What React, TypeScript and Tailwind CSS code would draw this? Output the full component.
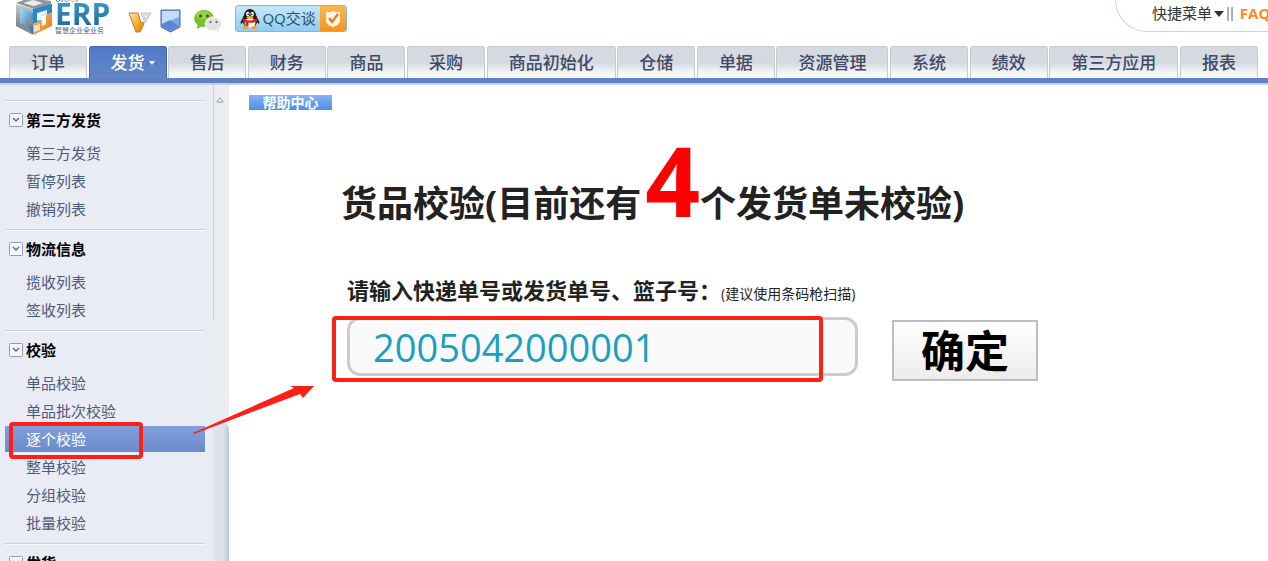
import { useState } from 'react'
import type { FormEvent } from 'react'

const TABS = [
  '订单',
  '发货',
  '售后',
  '财务',
  '商品',
  '采购',
  '商品初始化',
  '仓储',
  '单据',
  '资源管理',
  '系统',
  '绩效',
  '第三方应用',
  '报表',
]

const MENU = [
  { title: '第三方发货', items: ['第三方发货', '暂停列表', '撤销列表'] },
  { title: '物流信息', items: ['揽收列表', '签收列表'] },
  {
    title: '校验',
    items: ['单品校验', '单品批次校验', '逐个校验', '整单校验', '分组校验', '批量校验'],
  },
  { title: '发货', items: [] },
]

function Logo() {
  return (
    <a href="#home" aria-label="ERP" className="flex h-9 gap-[2px]">
      <svg width="38" height="36" viewBox="0 0 38 36">
        <defs>
          <linearGradient id="cubeGray" x1="0" y1="0" x2="0" y2="1">
            <stop offset="0" stopColor="#c9cbcd" />
            <stop offset="1" stopColor="#63676b" />
          </linearGradient>
          <linearGradient id="cubeBlue" x1="0" y1="0" x2="1" y2="1">
            <stop offset="0" stopColor="#a5dcf6" />
            <stop offset="1" stopColor="#1b6fb4" />
          </linearGradient>
          <linearGradient id="cubeOrange" x1="0" y1="0" x2="1" y2="1">
            <stop offset="0" stopColor="#f8bd62" />
            <stop offset="1" stopColor="#dd7d12" />
          </linearGradient>
        </defs>
        <path d="M1 3 14-2 36 1v4L19 9z" fill="#8e959b" />
        <path d="M8 3 18 0l10 3-9 3z" fill="#e9edf0" />
        <path d="M1 4 18 9v25L1 26z" fill="url(#cubeGray)" />
        <path d="M5 9l13 4v7l-7-2v6l7 3v7l-7-3-6-4z" fill="url(#cubeBlue)" />
        <path d="M18 9 37 4v9l-11 3v5l-8 3z" fill="#2a86c8" />
        <path d="M22 13l10-3v4l-6 2v4l-4 1z" fill="#eaf6fc" />
        <path d="M37 13v13L18 35V24l9-3v5l4-2v-9z" fill="url(#cubeOrange)" />
        <path d="M19 26l6-2v6l-6 2z" fill="#fbe4bd" />
        <path d="M1 26l6-3 7 5 4 7z" fill="#868b90" />
      </svg>
      <span className="relative flex flex-col">
        <svg width="24" height="3" viewBox="0 0 24 3" className="absolute top-0 left-0">
          <path d="M1 0l2 2 2-2M7 0v2M10 0c0 2 3 2 4 0" stroke="#3b93bf" fill="none" />
          <path d="M16 0c0 2 4 2 4 0" stroke="#f0954a" fill="none" />
          <path d="M22 0v2" stroke="#3b93bf" />
        </svg>
        <span className="bg-linear-to-b from-[#3f9ccb] to-[#1d6a9b] bg-clip-text text-[30px] leading-[27px] font-bold text-transparent">
          ERP
        </span>
        <span className="text-[7px] leading-[7px] text-[#3c5a86]">智慧企业全业务</span>
      </span>
    </a>
  )
}

function Badges() {
  return (
    <div className="flex items-center gap-2">
      <svg width="24" height="24" viewBox="0 0 24 24">
        <defs>
          <linearGradient id="gold" x1="0" y1="0" x2="1" y2="1">
            <stop offset="0" stopColor="#fff0b8" />
            <stop offset="0.5" stopColor="#f6b432" />
            <stop offset="1" stopColor="#d9780a" />
          </linearGradient>
        </defs>
        <path d="M1 4h9l3 10 2-1 1 2-4 8H8z" fill="url(#gold)" stroke="#b9792e" />
        <path d="M13 4h10l-6 10z" fill="#e6e6e6" stroke="#c4c4c4" />
        <path d="M16 6h4l-3 5z" fill="#fff" stroke="#cfcfcf" />
      </svg>
      <svg width="21" height="24" viewBox="0 0 21 24">
        <path d="M1 1h19v17l-9.500 5L1 18z" fill="#7fa8e8" stroke="#4768a8" />
        <path d="M2 2h17v6L2 15z" fill="#c3dcfa" />
        <path d="M2 15l8-4 9 6-8.500 5L2 18z" fill="#5a86d3" />
      </svg>
      <svg width="30" height="24" viewBox="0 0 30 24" className="ml-1">
        <path d="M5 15l-1 5 5-3z" fill="#6db522" />
        <ellipse cx="11" cy="9.500" rx="10" ry="8.500" fill="#79c02a" />
        <ellipse cx="10" cy="6" rx="7" ry="4" fill="#95d24b" />
        <circle cx="7.500" cy="7" r="1.500" fill="#31551a" />
        <circle cx="14.500" cy="7" r="1.500" fill="#31551a" />
        <path d="M24 19l2 4-5-2z" fill="#cfcfcf" />
        <ellipse cx="20.500" cy="15" rx="8.500" ry="7" fill="#e3e3e3" stroke="#fff" />
        <circle cx="17.500" cy="13" r="1.200" fill="#777" />
        <circle cx="23.500" cy="13" r="1.200" fill="#777" />
      </svg>
    </div>
  )
}

function QQButton() {
  return (
    <button
      type="button"
      className="flex h-[27px] items-center overflow-hidden rounded-[3px] border border-[#7db9dc] bg-linear-to-b from-[#c5e7fa] to-[#8fcdf1] text-[15px] text-[#274f6b]"
    >
      <svg width="20" height="20" viewBox="0 0 20 20" className="mr-[2px] ml-1">
        <path d="M3 9c-2 2-3 5-2 6l2-2zM17 9c2 2 3 5 2 6l-2-2z" fill="#1c1c1c" />
        <ellipse cx="10" cy="11" rx="7.500" ry="8" fill="#1c1c1c" />
        <ellipse cx="10" cy="6.500" rx="6" ry="6.500" fill="#1c1c1c" />
        <ellipse cx="10" cy="14" rx="5.500" ry="5" fill="#fff" />
        <ellipse cx="7.800" cy="5" rx="1.700" ry="2.300" fill="#fff" />
        <ellipse cx="12.200" cy="5" rx="1.700" ry="2.300" fill="#fff" />
        <circle cx="8.200" cy="5.200" r="0.800" />
        <circle cx="11.800" cy="5.200" r="0.800" />
        <ellipse cx="10" cy="8.300" rx="3.500" ry="1.200" fill="#f4a51c" />
        <path d="M3 9.500c4 2.500 10 2.500 14 0l.5 2.500c-4 2-7 2-9 1.700V17H5.500v-4L2.500 12z" fill="#e3231b" />
        <path d="M3 18c2-1.500 5-1 6 .5L8 20H4zM17 18c-2-1.500-5-1-6 .5l1 1.500h4z" fill="#f4a51c" />
      </svg>
      <span className="pr-1">QQ交谈</span>
      <span className="flex h-full w-[26px] items-center justify-center bg-linear-to-b from-[#fdb54b] to-[#f5941c]">
        <svg width="16" height="18" viewBox="0 0 16 18">
          <path d="M1 2c3 0 5 0 7-1 2 1 4 1 7 1v8c0 4-4 6-7 7-3-1-7-3-7-7z" fill="#fff6e4" />
          <path d="M4 8l3 4 6-8" fill="none" stroke="#ee7221" strokeWidth="2.200" />
        </svg>
      </span>
    </button>
  )
}

function Header() {
  return (
    <header className="flex h-[46px] justify-between overflow-hidden pl-[15px]">
      <div className="flex items-start">
        <Logo />
        <div className="mt-[9px] ml-[18px]">
          <Badges />
        </div>
        <div className="mt-[5px] ml-3">
          <QQButton />
        </div>
      </div>
      <div className="flex h-8 w-[153px] shrink-0 items-center overflow-hidden rounded-bl-[32px] border-b border-l border-[#c3d5ee] pb-1 pl-9 text-[15px] whitespace-nowrap text-[#333]">
        <a href="#quick">快捷菜单</a>
        <svg width="10" height="6" viewBox="0 0 10 6" className="mx-[2px] shrink-0">
          <path d="M0 0h10L5 6z" fill="#333" />
        </svg>
        <span className="font-['Liberation_Sans'] text-[#8a7f86]">||</span>
        <a href="#faq" className="ml-[6px] font-bold text-[#ff8a1c]">
          FAQ
        </a>
      </div>
    </header>
  )
}

function TabBar() {
  return (
    <nav className="flex justify-between border-b-[5px] border-[#5f82c3] pr-[10px] pl-[9px] shadow-[0_2px_0_#ccd0dc]">
      {TABS.map((tab) => (
        <a
          key={tab}
          href="#tab"
          className={`flex h-8 items-center rounded-t-[3px] border border-b-0 px-[21px] text-[17px] font-medium whitespace-nowrap ${
            tab === '发货'
              ? 'border-[#4468ae] bg-linear-to-b from-[#5179c8] to-[#6486c8] font-bold text-white'
              : 'border-[#c5cad3] bg-linear-to-b from-[#d5d9e0] from-50% to-[#f6f8f8] to-85% text-[#3e4a66]'
          }`}
        >
          {tab}
          {tab === '发货' && (
            <svg width="6" height="4" viewBox="0 0 6 4" className="-mr-[10px] ml-1">
              <path d="M0 0h6L3 4z" fill="#fff" />
            </svg>
          )}
        </a>
      ))}
    </nav>
  )
}

function Sidebar() {
  const [active, setActive] = useState('逐个校验')

  return (
    <aside className="flex w-[229px] shrink-0 bg-[#e9ecf4]">
      <div className="flex-1 overflow-hidden pt-[15px] pr-2 pl-[5px]">
        {MENU.map((group) => (
          <section
            key={group.title}
            className="border-t border-[#c2d2ea] pt-1 pb-[6px] shadow-[inset_0_1px_0_#f8fafd]"
          >
            <h2 className="mb-1 flex h-[30px] items-center gap-[3px] pl-1 text-[15px] font-bold text-black">
              <svg width="14" height="14" viewBox="0 0 14 14">
                <rect x="0.500" y="0.500" width="13" height="13" rx="1" fill="#f4f6fb" stroke="#8f9dc6" />
                <path d="M4 5l3 3 3-3" fill="none" stroke="#5a6a98" strokeWidth="1.500" />
              </svg>
              {group.title}
            </h2>
            <ul>
              {group.items.map((item) => (
                <li key={item} className="relative h-7 py-px">
                  <a
                    href="#menu"
                    onClick={() => setActive(item)}
                    className={`flex h-[26px] items-center pl-[21px] text-[15px] ${
                      item === active
                        ? 'bg-linear-to-b from-[#819fdb] to-[#6c8bcb] text-white'
                        : 'text-[#4d5b7c]'
                    }`}
                  >
                    {item}
                  </a>
                  {item === active && (
                    <span className="absolute -top-[3px] left-1 h-[37px] w-[134px] rounded-[4px] border-4 border-[#ff1f14]" />
                  )}
                </li>
              ))}
            </ul>
          </section>
        ))}
      </div>
      <div className="flex w-4 flex-col bg-[#ebedf3]">
        <div className="h-[235px] border-l border-[#cfcfd6] pt-3 pl-[2px]">
          <svg width="8" height="6" viewBox="0 0 8 6">
            <path d="M4 .7 7.200 5H.8z" fill="#fff" stroke="#999" />
          </svg>
        </div>
        <div className="mt-[104px] flex-1 rounded-tr-[6px] bg-linear-to-r from-[#dde2ed] from-60% to-[#bcc5dc]" />
      </div>
    </aside>
  )
}

function CheckForm() {
  const [code, setCode] = useState('2005042000001')

  const handleSubmit = (e: FormEvent) => {
    e.preventDefault()
  }

  return (
    <form onSubmit={handleSubmit} className="mt-[22px] pl-[92px]">
      <h1 className="text-4xl leading-[96px] font-bold whitespace-nowrap text-[#222]">
        货品校验(目前还有<span className="ml-1 text-8xl leading-[96px] text-[#ff0000]">4</span>
        个发货单未校验)
      </h1>
      <div className="mt-[22px] pl-[6px]">
        <label htmlFor="code" className="block leading-8 whitespace-nowrap text-[#222]">
          <span className="text-[22px] font-bold">请输入快递单号或发货单号、篮子号：</span>
          <span className="text-sm">(建议使用条码枪扫描)</span>
        </label>
        <div className="mt-2 flex items-start gap-[34px]">
          <div className="relative w-[511px]">
            <input
              id="code"
              type="text"
              value={code}
              onChange={(e) => setCode(e.target.value)}
              className="h-[59px] w-full rounded-[13px] border-[3px] border-[#ccc] bg-[#fafafa] px-[23px] text-[38px] text-[#1a9fc0] outline-none"
            />
            <span className="pointer-events-none absolute -top-px -left-[15px] h-[66px] w-[491px] rounded-[4px] border-4 border-[#ff1f14]" />
          </div>
          <button
            type="submit"
            className="mt-[3px] h-[61px] w-[146px] border-2 border-[#bdbdbd] bg-linear-to-b from-white to-[#ececec] text-[44px] leading-none font-bold text-black"
          >
            确定
          </button>
        </div>
      </div>
    </form>
  )
}

export default function App() {
  return (
    <div className="relative flex h-screen flex-col overflow-hidden bg-white font-['Open_Sans','Noto_Sans_CJK_SC',sans-serif]">
      <Header />
      <TabBar />
      <div className="mt-[2px] flex min-h-0 flex-1">
        <Sidebar />
        <main className="min-w-0 flex-1 pt-[10px] pl-5">
          <a
            href="#help"
            className="flex h-[15px] w-[83px] items-center justify-center overflow-hidden bg-linear-to-b from-[#86b4f0] to-[#4f8de6] text-sm leading-none font-bold text-white"
          >
            帮助中心
          </a>
          <CheckForm />
        </main>
      </div>
      <svg
        width="124"
        height="52"
        viewBox="0 0 124 52"
        className="pointer-events-none absolute top-[384px] left-[192px]"
      >
        <path d="M1 49 102 4 98 2 122 2 111 14 108 10 2 50z" fill="#ff1f14" />
      </svg>
    </div>
  )
}
